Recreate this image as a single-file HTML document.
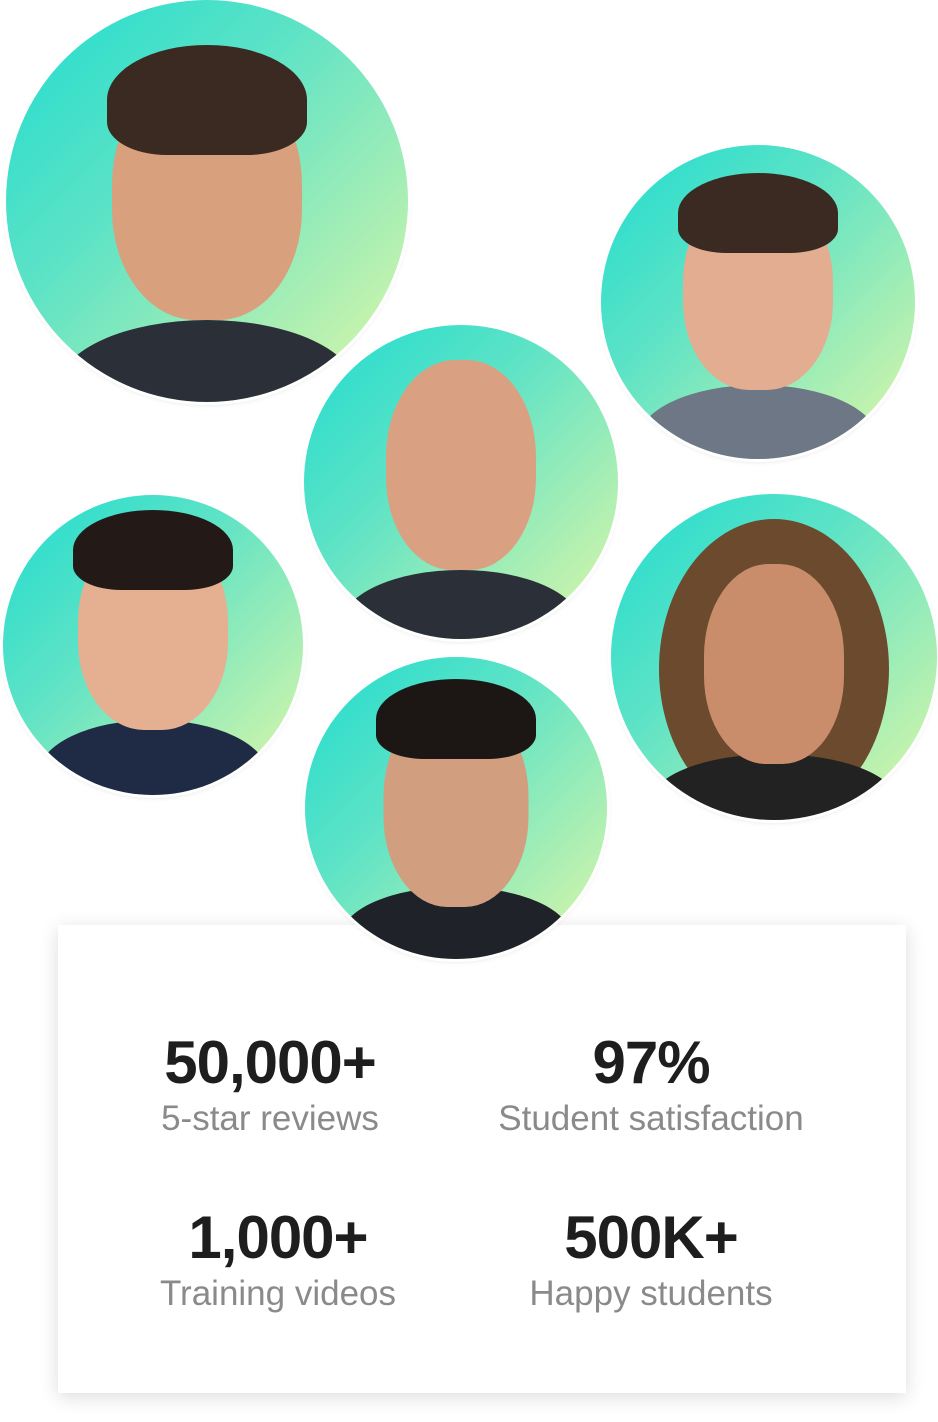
<!DOCTYPE html>
<html><head><meta charset="utf-8"><style>
html,body{margin:0;padding:0;background:#fff;}
body{width:938px;height:1422px;position:relative;overflow:hidden;font-family:"Liberation Sans",sans-serif;}
.c{position:absolute;z-index:2;border-radius:50%;background:linear-gradient(135deg,#1fdccf 0%,#5ee3c6 40%,#e2f7a6 100%);box-shadow:0 0 0 3px #fff,0 2px 6px rgba(0,0,0,.15);overflow:hidden;}
.c .h{position:absolute;left:50%;transform:translateX(-50%);border-radius:46% 46% 44% 44%;background:#d9a07e;}
.c .hair{position:absolute;left:50%;transform:translateX(-50%);border-radius:50% 50% 30% 30%;background:#3a2a22;}
.c .s{position:absolute;left:50%;transform:translateX(-50%);border-radius:50% 50% 0 0;background:#2b2f38;}
.card{position:absolute;z-index:1;left:58px;top:925px;width:848px;height:468px;background:#fff;box-shadow:0 4px 18px rgba(0,0,0,.14);}
.st{position:absolute;width:400px;text-align:center;}
.n{font-size:60px;font-weight:bold;color:#1e1e1e;letter-spacing:-1px;line-height:60px;}
.l{font-size:35px;color:#8a8a8a;line-height:40px;margin-top:6px;}
</style></head><body>

<div class="c" style="left:6px;top:0;width:402px;height:402px">
 <div class="s" style="width:300px;height:140px;top:320px"></div>
 <div class="h" style="width:190px;height:250px;top:70px"></div>
 <div class="hair" style="width:200px;height:110px;top:45px"></div>
</div>
<div class="c" style="left:601px;top:145px;width:314px;height:314px">
 <div class="s" style="width:240px;height:110px;top:240px;background:#6d7785"></div>
 <div class="h" style="width:150px;height:200px;top:45px;background:#e3ad91"></div>
 <div class="hair" style="width:160px;height:80px;top:28px"></div>
</div>
<div class="c" style="left:304px;top:325px;width:314px;height:314px">
 <div class="s" style="width:240px;height:110px;top:245px"></div>
 <div class="h" style="width:150px;height:210px;top:35px;background:#d9a182"></div>
</div>
<div class="c" style="left:3px;top:495px;width:300px;height:300px">
 <div class="s" style="width:230px;height:110px;top:225px;background:#1f2a44"></div>
 <div class="h" style="width:150px;height:200px;top:35px;background:#e5b092"></div>
 <div class="hair" style="width:160px;height:80px;top:15px;background:#231a17"></div>
</div>
<div class="c" style="left:611px;top:494px;width:326px;height:326px">
 <div class="hair" style="width:230px;height:300px;top:25px;background:#6b4a2e;border-radius:50%"></div>
 <div class="s" style="width:250px;height:100px;top:260px;background:#222"></div>
 <div class="h" style="width:140px;height:200px;top:70px;background:#c98d6c"></div>
</div>
<div class="c" style="left:305px;top:657px;width:302px;height:302px">
 <div class="s" style="width:230px;height:100px;top:230px;background:#1f2229"></div>
 <div class="h" style="width:145px;height:205px;top:45px;background:#d19e80"></div>
 <div class="hair" style="width:160px;height:80px;top:22px;background:#1c1714"></div>
</div>

<div class="card">
 <div class="st" style="left:12px;top:108px"><div class="n">50,000+</div><div class="l">5-star reviews</div></div>
 <div class="st" style="left:393px;top:108px"><div class="n">97%</div><div class="l">Student satisfaction</div></div>
 <div class="st" style="left:20px;top:283px"><div class="n">1,000+</div><div class="l">Training videos</div></div>
 <div class="st" style="left:393px;top:283px"><div class="n">500K+</div><div class="l">Happy students</div></div>
</div>
</body></html>
